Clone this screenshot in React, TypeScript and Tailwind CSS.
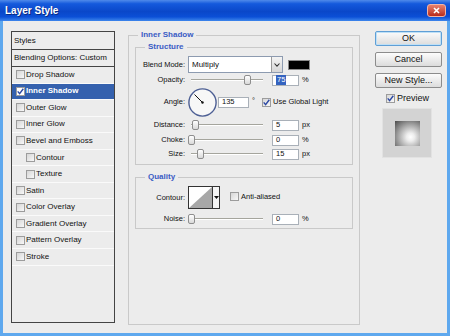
import React from "react";

type Item = { label: string; sub?: boolean; on?: boolean; sel?: boolean };

const items: Item[] = [
  { label: "Drop Shadow" },
  { label: "Inner Shadow", on: true, sel: true },
  { label: "Outer Glow" },
  { label: "Inner Glow" },
  { label: "Bevel and Emboss" },
  { label: "Contour", sub: true },
  { label: "Texture", sub: true },
  { label: "Satin" },
  { label: "Color Overlay" },
  { label: "Gradient Overlay" },
  { label: "Pattern Overlay" },
  { label: "Stroke" },
];

const Check = ({ on = false, white = false }: { on?: boolean; white?: boolean }) => (
  <span
    className={`flex h-[9px] w-[9px] shrink-0 items-center justify-center border border-[#9c9c9c] ${
      white ? "bg-white" : "bg-linear-to-br from-[#d6d6d6] to-[#f8f8f8]"
    }`}
  >
    {on && (
      <svg width="7" height="7" viewBox="0 0 7 7">
        <path d="M0.7 3.4 L2.6 5.6 L6.3 0.8" fill="none" stroke="#2b47a3" strokeWidth="1.4" />
      </svg>
    )}
  </span>
);

const Slider = ({ pos }: { pos: number }) => (
  <div className="relative ml-[3px] h-[12px] w-[78px] shrink-0">
    <div className="absolute left-[3px] right-[3px] top-[5px] h-[2px] border-t border-[#a5a59d] bg-white" />
    <div
      className="absolute top-[1px] h-[10px] w-[7px] rounded-[2px] border border-[#8e8e8e] bg-linear-to-b from-white to-[#d9d9d9]"
      style={{ left: pos }}
    />
  </div>
);

const Field = ({ value, sel = false, w = "w-[27px]" }: { value: string; sel?: boolean; w?: string }) => (
  <div className={`flex h-[11px] ${w} shrink-0 items-center border border-[#a9b0b8] bg-white pl-[3px] text-[7.5px] leading-none`}>
    {sel ? <span className="bg-[#3463c0] px-[1px] py-[1px] text-white">{value}</span> : <span>{value}</span>}
  </div>
);

const Label = ({ children }: { children: React.ReactNode }) => (
  <span className="w-[49px] shrink-0 text-right text-[7.5px]">{children}</span>
);

const SliderRow = ({ label, pos, value, unit, sel, mt }: { label: string; pos: number; value: string; unit: string; sel?: boolean; mt: string }) => (
  <div className={`flex h-[12px] items-center ${mt}`}>
    <Label>{label}</Label>
    <Slider pos={pos} />
    <div className="ml-[6px]">
      <Field value={value} sel={sel} />
    </div>
    <span className="ml-[3px] text-[7.5px]">{unit}</span>
  </div>
);

const Btn = ({ children, def = false, mt = "" }: { children: React.ReactNode; def?: boolean; mt?: string }) => (
  <div
    className={`flex h-[15px] w-[67px] items-center justify-center rounded-[2px] border ${mt} ${
      def ? "border-[#5f9fd6] shadow-[inset_0_0_0_1px_#bfe0f6]" : "border-[#8c8c8c]"
    } bg-linear-to-b from-[#fcfcfc] to-[#dcdcdc] text-[9px]`}
  >
    {children}
  </div>
);

const legend = "px-[3px] text-[8px] font-bold leading-[12px] text-[#3a5bc4]";

export default function App() {
  return (
    <div className="flex h-[336px] w-[450px] flex-col bg-[#5ea8ee] font-['Liberation_Sans',Arial,sans-serif] text-[#111]">
      <div className="flex h-[21px] shrink-0 items-center bg-[linear-gradient(#4f8aea_0%,#1459dc_18%,#0a47c9_55%,#0b4fd6_80%,#3d86ec_100%)] pl-[5px]">
        <span className="text-[10px] font-bold text-white [text-shadow:1px_1px_0_#0a2a80]">Layer Style</span>
        <div className="ml-auto mr-[4px] flex h-[13px] w-[19px] items-center justify-center rounded-[3px] border border-[#f2b4a6] bg-linear-to-b from-[#e8806e] to-[#b7281a]">
          <svg width="7" height="7" viewBox="0 0 7 7">
            <path d="M1 1 L6 6 M6 1 L1 6" stroke="#fff" strokeWidth="1.6" />
          </svg>
        </div>
      </div>

      <div className="mx-[3px] mb-[3px] flex flex-1 items-start bg-[#ececec] pl-[8px]">
        {/* styles list */}
        <div className="mt-[10px] flex h-[292px] w-[104px] shrink-0 flex-col border border-[#444] text-[8px]">
          <div className="flex h-[18px] items-center border-b border-[#444] pl-[2px]">Styles</div>
          <div className="flex h-[17px] items-center border-b border-[#444] pl-[2px]">Blending Options: Custom</div>
          {items.map((it) => (
            <div
              key={it.label}
              className={`flex h-[16.55px] items-center gap-[1px] border-b border-[#fafafa] ${it.sub ? "pl-[14px]" : "pl-[4px]"} ${
                it.sel ? "bg-[#3561ae] font-bold text-white" : ""
              }`}
            >
              <Check on={it.on} white={it.sel} />
              <span>{it.label}</span>
            </div>
          ))}
        </div>

        {/* settings */}
        <fieldset className="ml-[13px] mt-[8px] h-[296px] w-[232px] shrink-0 border border-[#c9c9c9] px-[6px]">
          <legend className={`ml-[3px] ${legend}`}>Inner Shadow</legend>

          <fieldset className="border border-[#c9c9c9] pb-[4px]">
            <legend className={`ml-[9px] ${legend}`}>Structure</legend>

            <div className="mt-[3px] flex h-[17px] items-center">
              <Label>Blend Mode:</Label>
              <div className="ml-[3px] flex h-[17px] w-[95px] items-center border border-[#8d9bb0] bg-white">
                <span className="flex-1 pl-[3px] text-[8px]">Multiply</span>
                <span className="flex h-full w-[11px] items-center justify-center border-l border-[#9a9a9a] bg-linear-to-b from-[#f4f4f4] to-[#d6d6d6]">
                  <svg width="6" height="4" viewBox="0 0 6 4">
                    <path d="M0.5 0.5 L3 3.2 L5.5 0.5" fill="none" stroke="#333" strokeWidth="1.1" />
                  </svg>
                </span>
              </div>
              <div className="ml-[5px] h-[10px] w-[22px] border border-[#8a8a8a] bg-black" />
            </div>

            <SliderRow label="Opacity:" pos={56} value="75" unit="%" sel mt="mt-[1px]" />

            <div className="mt-[1px] flex h-[30px] items-center">
              <Label>Angle:</Label>
              <svg className="ml-[3px] shrink-0" width="29" height="29" viewBox="0 0 29 29">
                <circle cx="14.5" cy="14.5" r="13.6" fill="#f7f7f7" stroke="#4d5f94" strokeWidth="1.4" />
                <line x1="14.5" y1="14.5" x2="6.5" y2="6.5" stroke="#111" strokeWidth="1" />
                <circle cx="14.5" cy="14.5" r="1.2" fill="#111" />
              </svg>
              <div className="ml-[1px]">
                <Field value="135" w="w-[31px]" />
              </div>
              <span className="ml-[3px] self-start pt-[8px] text-[7.5px]">°</span>
              <span className="ml-[7px]">
                <Check on />
              </span>
              <span className="ml-[2px] text-[7.5px]">Use Global Light</span>
            </div>

            <SliderRow label="Distance:" pos={4} value="5" unit="px" mt="mt-[2px]" />
            <SliderRow label="Choke:" pos={0} value="0" unit="%" mt="mt-[3px]" />
            <SliderRow label="Size:" pos={9} value="15" unit="px" mt="mt-[2px]" />
          </fieldset>

          <fieldset className="mt-[6px] border border-[#c9c9c9] pb-[3px]">
            <legend className={`ml-[9px] ${legend}`}>Quality</legend>

            <div className="mt-[3px] flex h-[23px] items-center">
              <Label>Contour:</Label>
              <div className="ml-[3px] flex h-[23px] shrink-0">
                <div className="h-[23px] w-[25px] border border-[#333] bg-white">
                  <svg width="23" height="21" viewBox="0 0 23 21" className="block">
                    <polygon points="0,21 23,0 23,21" fill="#a7a7a7" />
                  </svg>
                </div>
                <div className="flex h-[23px] w-[7px] items-center justify-center border border-l-0 border-[#333] bg-[#f4f4f4]">
                  <svg width="5" height="3" viewBox="0 0 5 3">
                    <polygon points="0,0 5,0 2.5,3" fill="#111" />
                  </svg>
                </div>
              </div>
              <span className="ml-[10px] mb-[2px]">
                <Check />
              </span>
              <span className="ml-[2px] mb-[2px] text-[7.5px]">Anti-aliased</span>
            </div>

            <SliderRow label="Noise:" pos={0} value="0" unit="%" mt="mt-[4px]" />
          </fieldset>
        </fieldset>

        {/* buttons */}
        <div className="ml-[15px] mt-[10px] flex w-[67px] shrink-0 flex-col text-[9px]">
          <Btn def>OK</Btn>
          <Btn mt="mt-[6px]">Cancel</Btn>
          <Btn mt="mt-[6px]">New Style...</Btn>
          <div className="ml-[11px] mt-[5px] flex h-[10px] items-center gap-[2px] leading-[10px]">
            <Check on />
            <span>Preview</span>
          </div>
          <div className="ml-[7px] mt-[5px] flex h-[50px] w-[50px] items-center justify-center border border-[#e2e2e2] bg-[#d3d3d3]">
            <div className="h-[25px] w-[25px] bg-[radial-gradient(circle_at_62%_64%,#fff_0%,#ededed_18%,#a5a5a5_55%,#4a4a4a_100%)]" />
          </div>
        </div>
      </div>
    </div>
  );
}
